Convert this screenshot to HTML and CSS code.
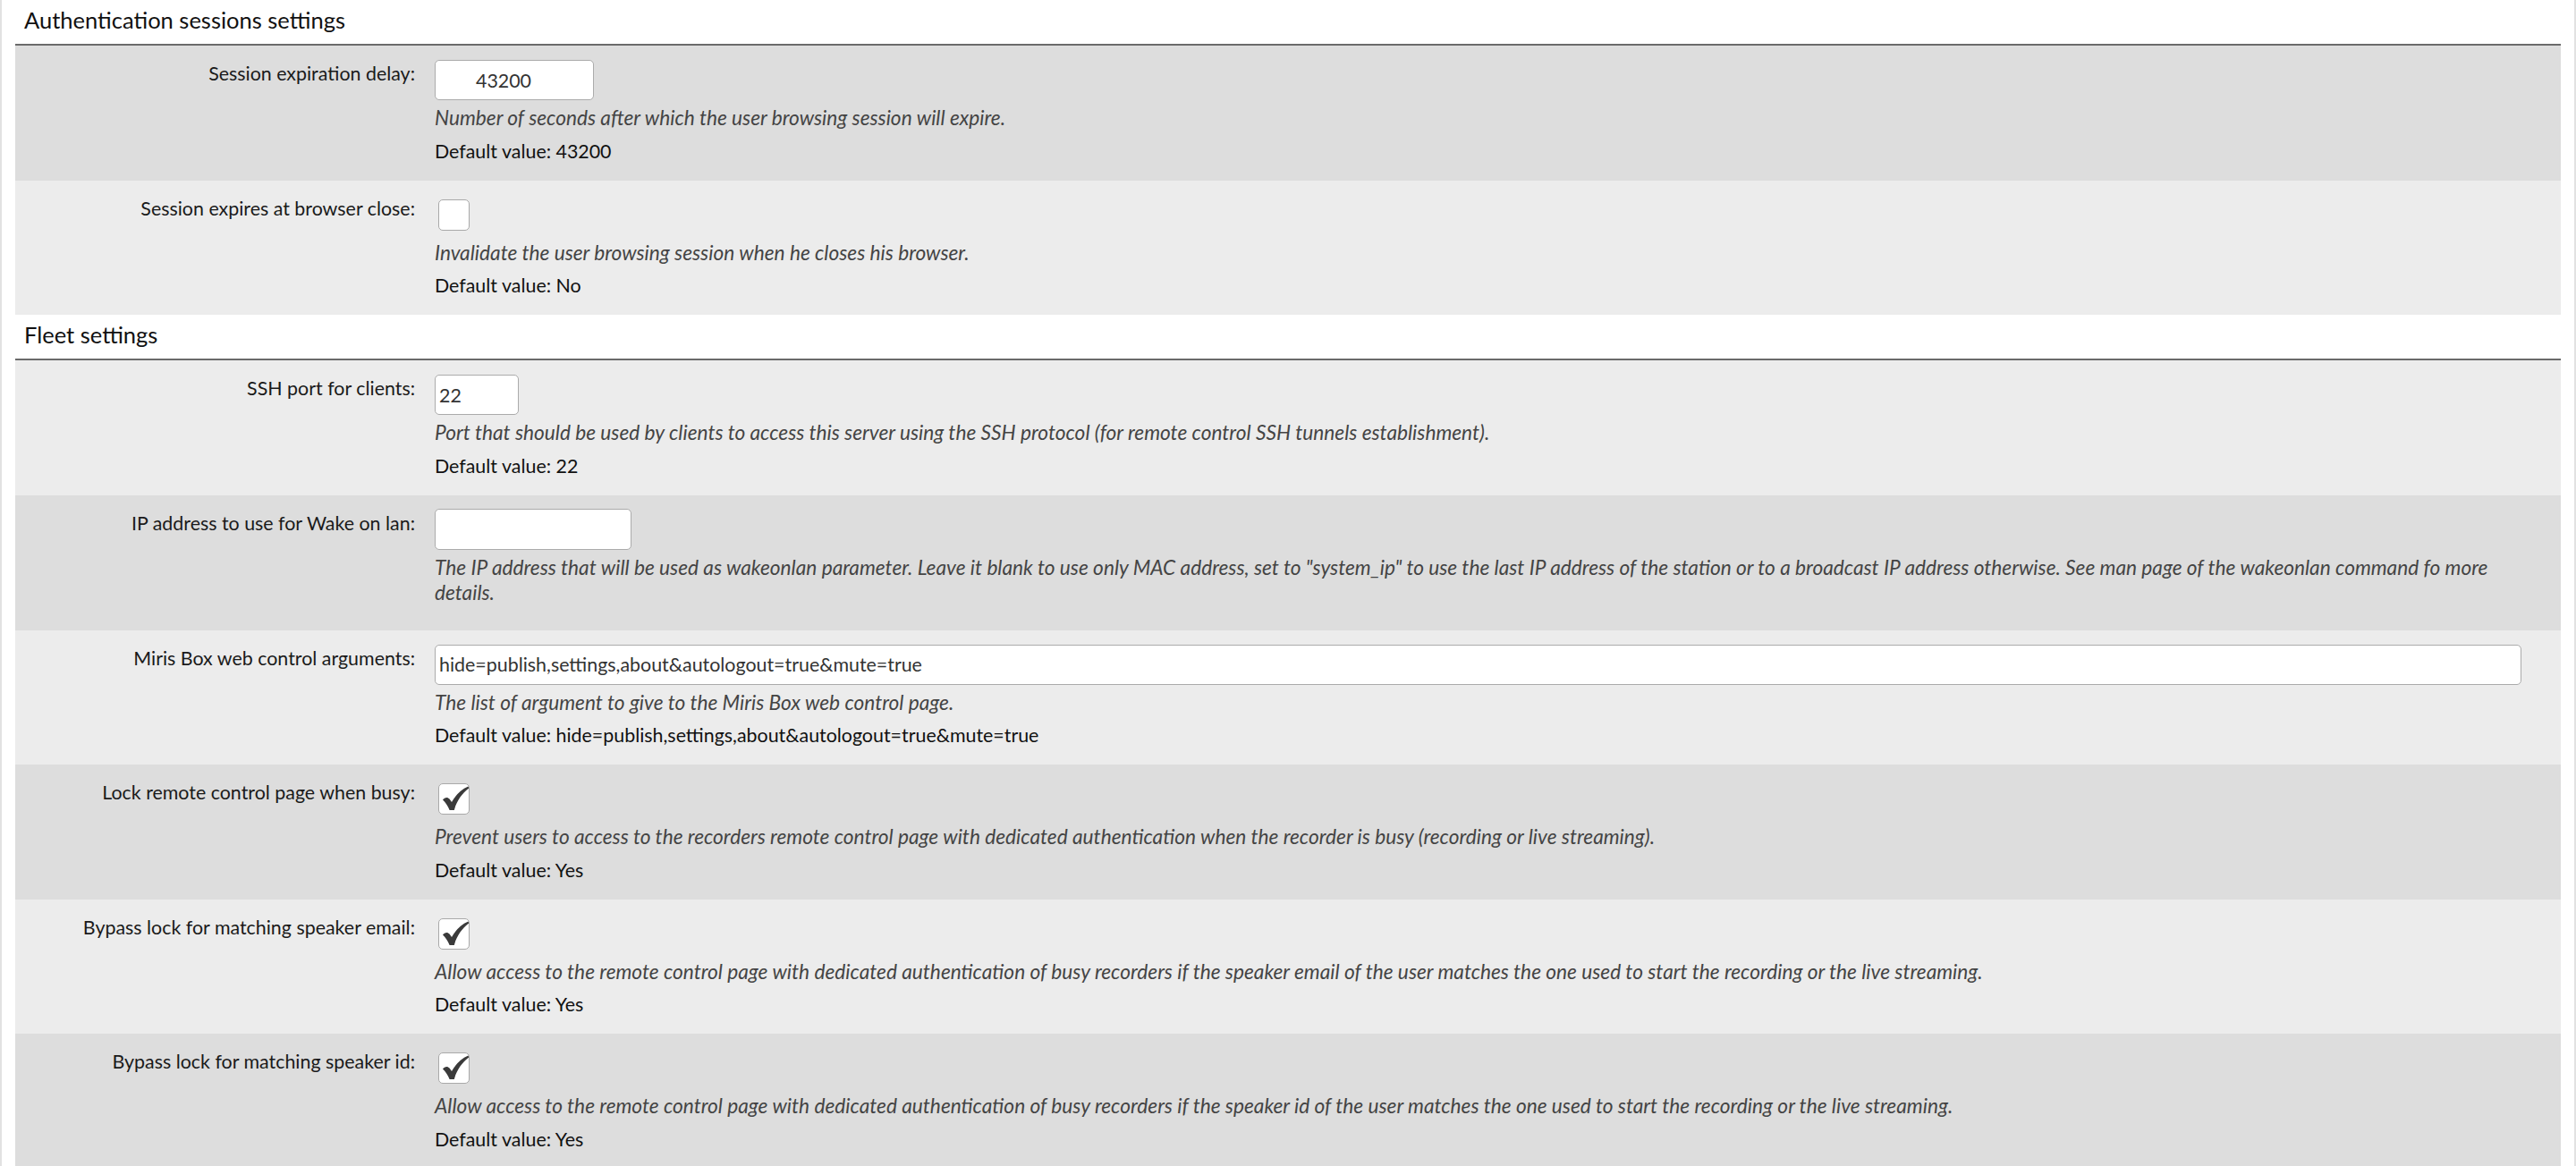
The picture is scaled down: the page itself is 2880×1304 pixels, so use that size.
FILE: index.html
```html
<!DOCTYPE html>
<html lang="en">
<head>
<meta charset="utf-8">
<title>Settings</title>
<link rel="stylesheet" href="styles.css">
</head>
<body>
<div class="page">
  <section class="group">
    <h2 class="group-title">Authentication sessions settings</h2>

    <div class="field field-dark">
      <label class="field-label">Session expiration delay:</label>
      <div class="field-body">
        <div class="field-control"><input class="input input-number input-sm" type="text" value="43200"></div>
        <p class="field-help">Number of seconds after which the user browsing session will expire.</p>
        <p class="field-default">Default value: 43200</p>
      </div>
    </div>

    <div class="field field-light">
      <label class="field-label">Session expires at browser close:</label>
      <div class="field-body">
        <div class="field-control"><span class="check"></span></div>
        <p class="field-help">Invalidate the user browsing session when he closes his browser.</p>
        <p class="field-default">Default value: No</p>
      </div>
    </div>
  </section>

  <section class="group">
    <h2 class="group-title">Fleet settings</h2>

    <div class="field field-light">
      <label class="field-label">SSH port for clients:</label>
      <div class="field-body">
        <div class="field-control"><input class="input input-xs" type="text" value="22"></div>
        <p class="field-help">Port that should be used by clients to access this server using the SSH protocol (for remote control SSH tunnels establishment).</p>
        <p class="field-default">Default value: 22</p>
      </div>
    </div>

    <div class="field field-dark">
      <label class="field-label">IP address to use for Wake on lan:</label>
      <div class="field-body">
        <div class="field-control"><input class="input input-md" type="text" value=""></div>
        <p class="field-help">The IP address that will be used as wakeonlan parameter. Leave it blank to use only MAC address, set to "system_ip" to use the last IP address of the station or to a broadcast IP address otherwise. See man page of the wakeonlan command fo more details.</p>
        <p class="field-default"></p>
      </div>
    </div>

    <div class="field field-light">
      <label class="field-label">Miris Box web control arguments:</label>
      <div class="field-body">
        <div class="field-control"><input class="input input-full" type="text" value="hide=publish,settings,about&amp;autologout=true&amp;mute=true"></div>
        <p class="field-help">The list of argument to give to the Miris Box web control page.</p>
        <p class="field-default">Default value: hide=publish,settings,about&amp;autologout=true&amp;mute=true</p>
      </div>
    </div>

    <div class="field field-dark">
      <label class="field-label">Lock remote control page when busy:</label>
      <div class="field-body">
        <div class="field-control"><span class="check"><svg class="check-mark" viewBox="0 0 35 35" width="35" height="35"><path d="M5 18.5 C7 15.5 10.5 15 12.5 17.5 L15 21 C19.5 13 25.5 7 33.5 3.5 L34.2 5.6 C26.5 11.5 20.5 20 17.8 30 L12.6 30 C10.6 25 8 21.5 5 18.5 Z"/></svg></span></div>
        <p class="field-help">Prevent users to access to the recorders remote control page with dedicated authentication when the recorder is busy (recording or live streaming).</p>
        <p class="field-default">Default value: Yes</p>
      </div>
    </div>

    <div class="field field-light">
      <label class="field-label">Bypass lock for matching speaker email:</label>
      <div class="field-body">
        <div class="field-control"><span class="check"><svg class="check-mark" viewBox="0 0 35 35" width="35" height="35"><path d="M5 18.5 C7 15.5 10.5 15 12.5 17.5 L15 21 C19.5 13 25.5 7 33.5 3.5 L34.2 5.6 C26.5 11.5 20.5 20 17.8 30 L12.6 30 C10.6 25 8 21.5 5 18.5 Z"/></svg></span></div>
        <p class="field-help">Allow access to the remote control page with dedicated authentication of busy recorders if the speaker email of the user matches the one used to start the recording or the live streaming.</p>
        <p class="field-default">Default value: Yes</p>
      </div>
    </div>

    <div class="field field-dark">
      <label class="field-label">Bypass lock for matching speaker id:</label>
      <div class="field-body">
        <div class="field-control"><span class="check"><svg class="check-mark" viewBox="0 0 35 35" width="35" height="35"><path d="M5 18.5 C7 15.5 10.5 15 12.5 17.5 L15 21 C19.5 13 25.5 7 33.5 3.5 L34.2 5.6 C26.5 11.5 20.5 20 17.8 30 L12.6 30 C10.6 25 8 21.5 5 18.5 Z"/></svg></span></div>
        <p class="field-help">Allow access to the remote control page with dedicated authentication of busy recorders if the speaker id of the user matches the one used to start the recording or the live streaming.</p>
        <p class="field-default">Default value: Yes</p>
      </div>
    </div>
  </section>
</div>
</body>
</html>
```

FILE: styles.css
```css
html, body {
  margin: 0;
  padding: 0;
  background: #ffffff;
}

body {
  font-family: "Lato", "Liberation Sans", sans-serif;
  font-size: 21.4px;
  color: #111111;
}

.page {
  border-left: 2px solid #e2e2e2;
  border-right: 2px solid #e2e2e2;
  padding: 0 15px;
  min-height: 1304px;
  box-sizing: border-box;
}

.group-title {
  margin: 0;
  height: 51px;
  box-sizing: border-box;
  padding: 0 0 7px 10px;
  line-height: 44px;
  font-size: 25.5px;
  font-weight: 400;
  color: #111111;
  border-bottom: 2px solid #6a6a6a;
}

.field {
  display: grid;
  grid-template-columns: 469px 1fr;
  padding: 16px 0 19px 0;
}

.field-dark {
  background: #dddddd;
}

.field-light {
  background: #ececec;
}

.field-label {
  text-align: right;
  padding-right: 22px;
  margin-top: 1px;
  line-height: 28px;
  color: #1a1a1a;
}

.field-body {
  display: flex;
  flex-direction: column;
  padding-right: 44px;
  min-width: 0;
}

.field-control {
  height: 45px;
  display: flex;
  align-items: center;
}

.input {
  height: 45px;
  box-sizing: border-box;
  border: 1px solid #ababab;
  border-radius: 5px;
  background: #ffffff;
  font-family: "Lato", "Liberation Sans", sans-serif;
  font-size: 21.4px;
  color: #333333;
  padding: 0 4px;
  margin: 0;
  outline: none;
}

.input-number {
  text-align: center;
  padding-right: 28px;
}

.input-sm {
  width: 178px;
}

.input-xs {
  width: 94px;
}

.input-md {
  width: 220px;
  height: 46px;
}

.input-full {
  width: 100%;
}

.check {
  display: block;
  width: 35px;
  height: 35px;
  box-sizing: border-box;
  margin-left: 4px;
  border: 1px solid #a9a9a9;
  border-radius: 5px;
  background: #ffffff;
  position: relative;
}

.check-mark {
  position: absolute;
  left: -1px;
  top: -1px;
  fill: #3a3a3a;
}

.field-help {
  margin: 6px 0 0 0;
  line-height: 28.5px;
  font-size: 22.7px;
  font-style: italic;
  color: #444444;
}

.field-default {
  margin: 8px 0 0 0;
  line-height: 28px;
  min-height: 0;
  color: #111111;
}
```
